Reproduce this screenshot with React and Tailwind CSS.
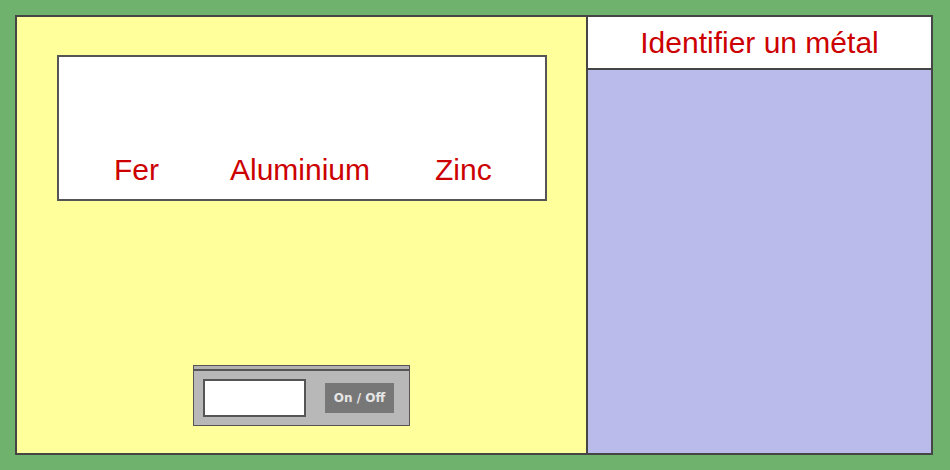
export default function App() {
  return (
    <div className="w-[950px] h-[470px] bg-[#6eb26e] pl-[15px] pt-[15px] font-['Liberation_Sans',Arial,sans-serif]">
      <div className="flex w-[918px] h-[440px] border-2 border-[#454545]">
        {/* left: bench */}
        <div className="flex flex-col w-[571px] bg-[#ffff9b] border-r-2 border-[#454545] pl-10 pr-[39px] pt-[38px] pb-[27px]">
          <div className="flex flex-col justify-end h-[146px] bg-white border-2 border-[#555] pb-[14px]">
            <div className="flex text-[30px] leading-none text-[#cc0000] pl-[55px]">
              <span>Fer</span>
              <span className="ml-[71px]">Aluminium</span>
              <span className="ml-[65px]">Zinc</span>
            </div>
          </div>

          <div className="mt-auto self-start ml-[136px] w-[217px] h-[61px] bg-[#b8b8b8] border border-[#555]">
            <div className="h-[5px] bg-[#b0b0b0] border-b-2 border-[#555]" />
            <div className="flex items-center pl-[9px] pt-[8px]">
              <div className="w-[103px] h-[38px] bg-white border-2 border-[#555]" />
              <button className="ml-[19px] w-[69px] h-[30px] bg-[#777] text-[#e6e6e6] text-[12px] font-bold font-['DejaVu_Sans',sans-serif]">
                On / Off
              </button>
            </div>
          </div>
        </div>

        {/* right: result */}
        <div className="flex flex-col flex-1 bg-[#bbbbeb]">
          <div className="h-[53px] bg-white border-b-2 border-[#454545] flex items-center justify-center text-[30px] leading-none text-[#cc0000]">
            Identifier un métal
          </div>
        </div>
      </div>
    </div>
  )
}
